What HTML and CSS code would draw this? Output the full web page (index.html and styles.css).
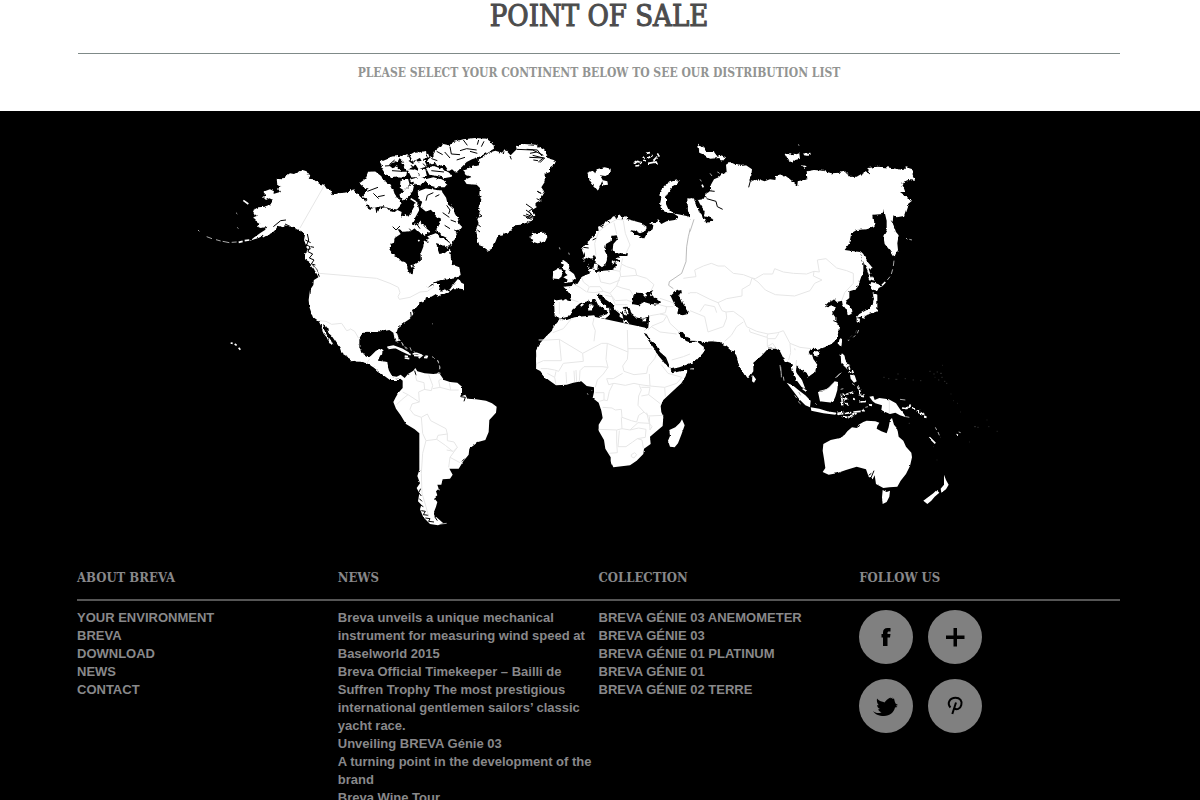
FILE: index.html
```html
<!DOCTYPE html>
<html lang="en">
<head>
<meta charset="utf-8">
<title>Breva – Point of Sale</title>
<link rel="stylesheet" href="styles.css">
</head>
<body>
<header class="intro">
  <h1 class="intro-title">POINT OF SALE</h1>
  <p class="intro-lead">PLEASE SELECT YOUR CONTINENT BELOW TO SEE OUR DISTRIBUTION LIST</p>
</header>

<main class="map-area">
<svg class="map" viewBox="190 130 820 404" role="img" aria-label="World map">
  <!-- Roughens the coastlines: strongly in the north, lightly elsewhere -->
  <filter id="coast" x="-5%" y="-5%" width="110%" height="110%" color-interpolation-filters="sRGB">
    <feTurbulence type="fractalNoise" baseFrequency="0.09" numOctaves="2" seed="4" result="noise"/>
    <feDisplacementMap in="SourceGraphic" in2="noise" scale="10" xChannelSelector="R" yChannelSelector="G"/>
  </filter>
  <filter id="coast-soft" x="-5%" y="-5%" width="110%" height="110%" color-interpolation-filters="sRGB">
    <feTurbulence type="fractalNoise" baseFrequency="0.06" numOctaves="2" seed="4" result="noise"/>
    <feDisplacementMap in="SourceGraphic" in2="noise" scale="6" xChannelSelector="R" yChannelSelector="G"/>
  </filter>
  <!-- Alaska, western Canada, Mexico -->
  <g transform="translate(190 130) scale(.33333)">
    <path class="land" d="M260 146L272 148 285 140 300 130 312 132 325 125 340 121 350 124 352 132 362 135 356 146 370 148 385 160 402 164 410 176 420 178 428 196 445 190 480 185 490 178 505 200 530 215V694L500 695 480 685 455 670 450 655 440 640 425 618 415 608 410 590 400 584 403 600 412 618 418 630 422 626 430 645 418 640 410 622 400 610 395 590 385 572 368 560 358 530 356 510 360 480 370 465 372 450 385 442 378 425 364 410 358 395 345 388 345 375 350 350 342 330 345 314 335 304 320 298 310 290 300 294 292 282 280 292 265 288 258 300 240 308 232 318 222 316 205 324 180 332 190 324 212 308 225 300 232 290 215 294 200 288 208 278 194 270 190 262 200 258 190 240 205 232 225 230 240 225 250 210 238 205 228 210 218 200 228 196 220 185 240 178 252 184 250 192 270 186 264 176 272 172 262 164Z"/>
    <path class="sea" d="M508 620L520 606 560 600V670L530 678 514 668 506 645Z"/>
    <path class="inlet" d="M352 312L356 330 350 345 360 350 354 365 368 372 358 384 372 390 364 402 376 405M346 330L362 338M345 362L362 356M362 350L372 352M368 405L380 418 388 440M250 290L272 272 288 270M285 282L302 290M450 188L476 184M430 192L455 182M402 586L412 608 426 630"/>
    <path class="isle" d="M160 211L175 222M218 320L245 306M178 330L164 332M158 334L146 337M122 639L128 640M134 642L140 646M146 653L151 659M372 412L384 432"/>
    <path class="islet" d="M140 336L125 337M118 338L98 334M92 333L78 329M66 326L50 320M24 300L28 304M138 248L142 252M142 292L145 296"/>
    <path class="border" d="M402 168L330 294M388 430L565 445 600 459M388 572L408 574 425 583 455 580 470 602 482 598 510 628"/>
  </g>
  <!-- Eastern Canada, Arctic islands, Greenland, Caribbean -->
  <g transform="translate(350 130) scale(.33333)">
    <path class="land" d="M0 176L8 194 20 188 35 205 48 215 44 228 60 236 76 234 80 252 90 235 108 232 120 244 134 246 142 240 155 246 152 260 168 252 175 260 190 236 200 214 208 240 196 262 186 280 198 292 182 304 160 305 142 296 152 312 134 324 132 338 122 342 118 358 130 374 142 380 154 394 172 400 172 416 180 432 188 433 192 405 212 392 210 376 220 350 222 330 240 325 258 338 262 355 268 372 286 368 300 356 303 385 310 405 328 412 332 435 315 445 296 448 272 450 250 458 232 474 252 462 270 462 268 478 282 486 300 478 308 466 326 444 334 458 342 462 342 478 312 474 300 484 285 488 262 500 258 492 244 500 228 502 224 516 208 520 200 532 186 540 190 552 180 566 162 578 145 592 140 606 147 628 142 636 134 628 130 608 118 600 100 604 90 600 80 606 72 606 40 605 28 625 28 665 38 678 55 682 75 675 80 662 98 658 96 672 86 678 84 692 112 696 116 728 134 744 155 750H120L90 728 70 712 50 700 20 692 0 694Z"/>
    <path class="land archipelago" d="M32 160L48 148 56 128 75 127 92 140 98 154 120 165 128 182 134 200 148 208 152 222 140 236 118 232 100 226 84 228 70 232 48 218 60 206 40 200 52 186 60 172 45 172ZM92 98L112 90 130 82 148 80 142 92 122 98 112 110 100 112ZM100 118L118 110 128 118 140 112 150 128 168 128 166 138 140 136 122 140 108 130ZM150 82L172 76 178 88 165 96ZM158 100L180 98 184 110 170 116ZM182 76L196 68 208 82 190 92ZM206 70L226 66 228 82 214 86ZM196 98L222 94 228 108 206 114ZM176 120L198 122 206 138 186 140ZM208 118L224 120 228 138 212 140ZM150 196L166 182 178 170 190 164 186 182 174 196 160 210ZM154 154L172 148 176 162 162 178 152 172ZM184 150L212 142 226 150 212 164 196 160ZM206 186L228 178 256 182 272 184 286 204 290 220 308 236 312 252 322 268 326 284 334 292 320 298 310 292 318 312 304 340 292 322 276 314 262 300 272 282 276 268 258 256 244 236 228 242 214 230 220 214 208 208ZM192 290L210 278 224 294 236 304 222 312 206 304ZM236 320L258 312 268 326 284 330 298 342 292 350 268 340 250 334Z"/>
    <path class="land" d="M226 148L250 142 280 150 292 162 284 172 258 172 232 164ZM228 114L252 108 278 118 298 128 306 140 286 144 262 138 238 134ZM232 92L250 78 256 60 280 42 298 46 310 36 340 28 375 24 410 26 430 42 432 56 408 70 388 80 366 88 350 96 330 116 318 128 306 118 296 124 284 104 262 108 256 98 240 104Z"/>
    <path class="land" d="M340 120L362 112 384 106 390 96 382 90 402 80 416 68 436 62 456 68 464 58 482 76 500 58 498 48 522 42 558 44 582 60 594 74 584 82 618 92 614 102 600 112 600 126 584 132 584 156 574 172 582 184 572 202 574 212 556 222 560 232 546 240 556 256 546 272 512 284 494 286 482 302 460 312 444 316 436 336 426 352 415 368 404 352 388 346 382 326 378 296 386 280 380 262 392 248 384 236 394 212 388 192 390 174 380 164 350 162 342 150 366 140 346 134ZM536 318L548 322 556 310 582 308 592 320 586 334 564 340 548 334 552 328ZM610 425L628 415V448L612 445ZM268 486L285 478 296 488 276 492Z"/>
    <path class="inlet" d="M300 50L304 72 330 74M330 62L350 56 380 60M284 66L300 84M360 64L382 70M320 90L345 82M245 86L262 92M260 64L278 74M340 30L352 46M386 30L382 44M402 34L394 50M52 184L84 172M84 200L104 196M70 190L86 206M228 212L232 196 250 188M256 200L268 194M290 226L300 240 296 252M278 248L298 262M302 270L318 276M284 286L300 296M134 90L118 104M126 122L156 124M105 108L132 106M218 100L230 112M244 122L282 126M500 58L548 60 580 76M548 76L580 84 565 96M540 70L560 66M528 222L548 236 536 244 552 262 528 252M528 262L545 268M386 250L396 258 386 262M384 284L392 290M382 300L390 306M560 206L572 212M562 184L574 190M480 78L484 88M460 72L462 64M448 70L450 62M182 546L184 562M150 288L138 300 128 290M190 310L178 296M210 296L196 276"/>
    <path class="sea" d="M214 316L232 322 232 336 218 330ZM202 370L212 376 212 392 198 396ZM228 272L252 262 272 264 270 280 250 290 232 286ZM235 250L246 244 262 262 246 270ZM270 350L284 346 288 362 272 370Z"/>
    <path class="isle" d="M198 216L182 206M196 230L188 244M220 74L214 106M236 82L232 72M170 92L190 106 200 92M192 120L212 130M110 92L124 86M205 330L208 334M184 405L186 412M115 655L136 652 156 662 182 674M192 676L214 678 206 684M164 684L178 686M222 682L232 683"/>
    <path class="islet" d="M246 580L248 582M146 626L152 632M156 640L160 648M166 650L172 656M180 652L184 662M192 664L198 672M250 682L254 686M262 690L266 698M268 706L270 716M266 726L262 732"/>
    <path class="border" d="M0 438L80 445 120 460 145 472 150 488 144 500 148 508 180 502 210 486 232 484 252 470M0 596L14 604 26 625M50 700L58 688 76 684 80 692M72 710L86 700 108 698"/>
  </g>
  <!-- Europe, western Asia, north Africa -->
  <g transform="translate(520 130) scale(.33333)">
    <path class="land" d="M186 360L190 348 206 344 202 336 222 320 228 306 236 302 234 290 250 284 258 272 272 268 280 258 292 262 296 252 306 262 318 258 322 268 340 272 362 278 380 290 376 304 360 310 345 302 332 300 342 314 358 316 370 330 382 308 398 298 400 286 390 280 408 278 412 268 424 282 440 274 464 270 478 262 460 250 500 258 522 270 504 244 502 205 514 206 520 232 540 244 552 262 560 284 600 290V635L580 632 552 636 530 632 532 650 552 650 550 668 528 692 500 704 478 712 452 718 456 730 480 724 502 722 490 750H80L60 725 50 710 48 690 52 655 76 625 96 606 98 592 118 572 122 566 104 556 102 512 130 508 150 514 152 496 138 478 130 470 155 468 160 460 172 462 186 440 210 430 206 416 204 402 220 392 190 392 192 376Z"/>
    <path class="sea" d="M222 374L228 386 226 402 236 404 246 412 258 402 262 378 254 362 258 342 272 334 274 318 290 316 294 326 280 342 278 360 286 372 304 370 324 370 322 378 300 378 286 384 300 392 296 398 286 394 288 408 276 420 250 422 230 430 222 416 210 418 204 400 216 394 190 392 198 380 214 386ZM120 566L152 558 156 540 180 520 204 514 214 504 226 508 234 524 248 534 262 542 262 552 252 556 254 566 266 558 270 548 266 540 274 542 262 530 246 518 238 508 232 494 246 494 250 504 268 516 282 524 286 540 300 552 298 560 310 566 306 550 302 544 314 542 308 532 322 530 330 534 334 552 346 562 368 566 388 558 386 582 384 598 366 598 345 592 322 592 300 588 285 602 272 594 260 590 242 582 226 578 230 568 222 556 200 558 164 562 140 570ZM336 522L340 498 352 488 372 490 370 500 382 498 376 490 400 480 390 494 404 502 420 516 414 524 392 522 372 516 356 526ZM452 498L466 484 484 480 486 492 474 494 484 508 490 522 502 540 504 552 488 556 472 548 476 536 462 520ZM474 605L488 606 500 622 516 628 528 622 534 636 524 642 500 634 482 622ZM370 608L380 612 392 632 410 648 420 666 438 682 452 716 436 704 416 684 404 658 384 630Z"/>
    <path class="land" d="M130 390L142 398 148 408 146 420 162 432 168 446 156 456 130 460 144 450 130 442 142 436 138 422 126 416 128 404 120 396ZM100 424L118 414 126 424 120 444 98 446ZM24 318L34 322 36 308 52 312 72 308 82 322 74 332 52 340 34 334 42 328ZM202 128L218 122 226 130 230 118 254 112 272 116 272 130 256 138 240 136 248 150 234 182 224 170 210 152ZM246 150L262 154 264 164 250 166ZM476 150L472 162 458 170 446 186 438 202 438 222 446 240 464 250 442 248 424 240 420 222 424 204 420 186 432 168 450 156ZM535 44L552 50 560 66 582 66 596 84 570 86 552 74 538 68ZM208 508L216 506 216 518 210 520ZM206 522L218 524 216 540 208 542ZM238 558L258 554 256 566 240 564ZM310 572L328 576 324 580 310 578ZM364 568L380 564 376 574 366 574ZM222 404L234 404 232 418 220 416Z"/>
    <path class="isle rough" d="M342 102L352 94 366 98M346 108L358 106M378 70L390 68M384 84L398 76M400 92L412 80M384 100L408 96 412 104M370 90L378 96M412 70L418 80M372 80L376 86M182 528L190 522M162 534L170 534M318 536L324 550M308 540L320 556M302 528L312 522M250 392L254 384M276 398L284 394"/>
    <path class="islet" d="M118 352L120 358M146 368L148 374M510 717L522 716M240 700L242 706"/>
    <path class="inlet" d="M486 244L518 262M518 206L522 232 546 252 554 272 544 288M546 200L560 212 588 212 600 222M560 206L580 226M534 192L548 210M20 58L52 60 66 78M28 82L74 84 60 98M40 90L54 92M10 256L38 264M18 240L34 252 22 266M52 184L62 190M238 286L248 292M262 272L270 278M286 258L290 268M308 262L306 270M218 330L230 324M190 352L206 354"/>
    <path class="frontier" d="M517 270L505 320 500 350 498 395 485 430 448 455 446 466 460 476"/>
    <path class="border" d="M228 376L224 340 236 305 260 285 290 268 310 270 318 262M282 278L290 312M310 272L316 310 330 345 318 370M308 385L304 402 320 410 346 418 350 436 380 445 402 464 394 480M278 420L300 424 304 404M300 424L302 440 350 436M300 440L290 468 306 474 330 480 340 496M235 430L242 456 270 462 300 450M185 442L190 456 208 470 202 486 222 488 250 484 270 490 290 468M160 462L180 472 200 486M152 508L176 516M118 516L118 552M210 470L240 470 250 484M270 490L286 512 320 510 336 516M256 496L276 500 286 524M288 524L322 524M402 520L440 530 436 548 420 552M420 505L450 515 462 520M436 530L460 530M386 558L420 552 440 556 450 580 476 604M384 600L396 588 430 574 440 558M394 590L420 606 470 612M455 690L490 680 520 668 524 640M490 445L524 440 524 416 560 410 580 400 600 405M504 490L550 486 570 512 600 518M504 548L540 545 560 562 600 540M525 550L534 600 550 610 548 632M560 562L560 610 600 590M98 608L130 596 156 564M222 560L218 582 225 602 222 634"/>
  </g>
  <!-- Siberia, China, India, Japan -->
  <g transform="translate(690 130) scale(.33333)">
    <path class="land" d="M0 206L12 202 14 215 24 240 34 262 44 268 42 286 70 268 56 262 42 258 44 244 30 222 24 210 40 208 50 190 64 182 62 166 72 148 86 142 98 130 110 126 108 104 120 96 138 104 150 108 168 106 186 118 184 136 178 150 190 152 206 148 224 154 240 148 256 150 258 138 284 136 300 148 322 168 322 154 352 148 350 124 372 120 400 122 424 130 450 128 470 124 480 140 500 140 524 126 534 130 536 114 560 110 590 112 640 120 648 112 668 118 668 134 676 152 654 150 634 158 640 170 646 186 630 186 650 200 666 212 654 222 642 258 620 262 610 256 608 278 618 306 626 316 622 340 624 360 614 382 602 364 584 342 580 318 590 300 590 272 586 256 582 236 578 252 550 254 554 290 530 298 500 300 484 310 478 340 464 360 480 362 492 364 510 366 520 400 520 424 508 456 498 478 478 484 478 504 466 514 474 526 486 538 488 552 474 556 470 540 458 524 456 512 440 516 432 508 420 512 408 524 412 532 424 526 440 534 426 548 436 562 436 576 448 584 444 612 438 630 424 642 404 652 382 660 366 656 360 670 380 704 376 724 356 740 350 728 332 718 320 706 318 726 326 750H320L310 728 304 700 284 692 270 664 258 656 234 656 214 678 190 698 190 724 176 744 164 736 148 708 134 664 124 662 110 650 90 636 60 634 0 632Z"/>
    <path class="land" d="M0 640L20 634 42 652 32 672 18 686 0 690ZM24 44L44 54 46 68 72 66 76 84 54 82 46 72 30 70ZM84 72L108 82 94 98ZM284 72L302 70 310 76 328 70 330 86 316 90 306 98 292 88ZM340 70L364 72 354 78 342 76ZM334 106L350 108 346 114ZM510 362L520 372 530 392 548 414 536 416 544 440 552 452 540 448 532 420 520 396ZM544 456L558 460 578 468 566 474 562 482 544 478 540 468ZM548 486L562 494 562 512 562 544 540 552 520 558 498 564 508 552 530 540 548 524 552 506ZM500 564L510 566 508 580 500 576ZM520 558L530 556 524 566 516 564ZM448 628L456 630 454 650 446 644ZM368 662L384 664 386 674 374 678ZM452 676L462 674 468 700 480 706 466 712 454 700ZM188 736L196 750H188Z"/>
    <path class="isle" d="M576 466L586 456M36 164L40 172"/>
    <path class="islet" d="M592 450L600 440M604 432L608 418M610 408L612 392M648 324L652 328M658 328L666 330M324 44L328 46M30 148L34 154M506 600L502 610M496 616L490 622M478 630L474 632M270 705L272 722M274 732L274 742M8 716L12 716M436 744L450 730M60 130L66 138M82 126L90 130"/>
    <path class="inlet" d="M28 200L36 194 50 202M50 206L78 214 82 230 98 238M40 190L54 182 74 184M76 116L92 130M184 142L176 172M322 150L320 164M466 126L480 138 504 136M604 272L616 288M530 124L540 132M430 572L446 578"/>
    <path class="frontier" d="M12 268L0 305"/>
    <path class="border" d="M0 442L18 440 14 420 40 408 64 400 84 408 104 408 130 430 160 434 186 444 196 446 220 432 248 432 254 416 280 426 310 430 350 432 372 424 388 426 382 390 408 386 440 414 470 422 490 430 490 460 464 488 456 510M186 444L204 456 226 480 256 494 314 498 360 482 374 460 396 450 370 438 372 424M186 444L180 464 156 478 156 498 110 506 84 518 60 508 20 488 0 488M84 518L96 542 108 546 110 564 100 590 54 606 44 560 0 542M108 546L130 544 160 566 170 590 200 604 234 612 264 608 280 602 300 640 330 652 364 656M160 576L140 590 124 616 104 634M178 598L180 606 230 622 234 612M232 620L232 650 248 640 256 652M234 626L256 626 266 610M300 640L302 668 296 690M314 655L320 680 344 680 360 714 340 726M320 684L318 706M30 545L44 524 74 530 80 548"/>
  </g>
  <!-- South America -->
  <g transform="translate(370 340) scale(.33333)">
    <path class="land soft" d="M0 50L18 32 36 28 32 44 22 64 50 66 56 90 66 108 80 110 92 104 104 114 114 102 130 92 136 84 142 94 164 100 190 102 208 100 222 120 240 126 262 128 276 140 276 158 270 170 286 164 292 176 318 178 348 182 366 190 380 200 378 218 358 240 356 276 346 300 324 306 298 326 296 344 280 364 266 386 238 386 248 404 240 416 218 418 214 434 202 434 206 446 198 454 202 466 192 474 202 486 198 500 192 516 198 530 220 550 204 556 180 552 160 532 150 508 154 494 144 484 148 460 140 444 150 430 142 408 148 390 148 320 148 280 134 268 108 252 92 226 78 206 70 186 76 174 84 160 98 144 98 122 92 116 78 116 66 112 56 106 36 82 0 76Z"/>
    <path class="isle" d="M52 22L70 18 96 28 116 40M128 42L140 40 156 46M104 48L114 50M166 48L174 50"/>
    <path class="islet" d="M186 50L190 52M204 62L206 70M210 80L208 88M206 98L212 100M76 0L84 8M94 6L100 14M104 20L110 28M212 552L230 550M204 448L210 450"/>
    <path class="inlet" d="M134 92L138 106M272 170L286 172 282 184M152 446L146 458 154 468M148 476L156 484M150 494L160 500M154 512L166 514 160 524 176 526M166 534L180 536 176 544 192 546M194 530L202 542M276 364L284 356"/>
    <path class="border" d="M136 104L140 122 162 128 164 148 146 156 148 186 126 192 120 208 132 224 154 232 158 280 168 302 158 340 154 400 156 460 168 500 176 530M98 156L114 164 94 180 80 194M114 164L148 186M162 148L184 152 188 136 176 104M188 146L210 142 206 122 216 116M210 142L240 150 266 150M238 128L242 150M154 232L172 222 182 242 228 266 232 282M168 302L200 298 204 286 232 282 232 302 252 306 262 322 250 334 230 330M200 298L226 316 248 334M262 322L240 352 236 382M240 352L270 368"/>
  </g>
  <!-- Africa -->
  <g transform="translate(520 300) scale(.33333)">
    <path class="land soft" d="M98 90L116 62 150 60 222 50 380 84 370 96 388 128 408 158 428 182 444 204 458 222 502 212 496 230 484 250 458 274 430 300 422 318 424 336 430 350 428 378 404 398 390 410 392 432 372 446 370 462 350 482 330 496 280 502 272 484 272 472 256 446 252 420 236 392 236 374 248 354 244 332 236 308 218 294 222 276 222 262 200 258 184 244 160 248 140 254 108 256 86 240 72 228 62 214 48 206 50 180 48 152 56 134 76 112ZM486 358L494 376 484 404 474 430 464 442 450 440 444 422 450 408 448 390 466 382 480 368Z"/>
    <path class="islet" d="M202 280L204 284M214 270L216 272M514 206L522 207"/>
    <path class="border" d="M98 98L130 86 156 54M222 54L218 72 226 92 222 124M56 120H84L118 118 188 160 245 130 262 130 324 156 322 90M324 146H396M118 118L124 182H70M70 182L52 190M188 160L190 184 130 190 116 214 104 210 82 206 62 206M262 130L258 178 264 202 246 200 192 200 180 212 178 246M324 156L322 178 308 198 312 214 342 224 380 220 384 200 404 176 410 160M264 202L250 222 232 240 226 262M260 236L280 236 308 220M260 236L266 254 282 250 316 256 342 250 360 254 390 258 388 222M390 258L434 262 470 250 486 232 444 220 424 194M434 262L436 290M226 278H252V300L238 304M252 300L262 302 268 274 280 250M248 322L276 324 286 330 304 328 306 352 334 362 350 366 356 346 372 336 354 316 356 288 364 270 358 256M364 262L390 262 386 284 364 288M386 284L422 312M372 336L386 348 430 346M236 388L290 390 306 386 304 352M306 386L330 390 354 368 388 370 380 338M290 390V426L292 458 268 460M298 392L294 440 318 440 338 426 352 416 376 412 378 388 356 384 330 390M352 416L366 420 370 444M334 464L344 458 350 464 342 474 334 470ZM388 370L396 380 390 390 388 350M140 250L138 216M164 246L162 212M170 246L168 210M108 254L104 232 82 220M104 232L108 214"/>
  </g>
  <!-- South-east Asia, Australia, New Zealand -->
  <g transform="translate(740 320) scale(.33333)">
    <path class="land soft" d="M150 110L176 124 190 140 206 168 222 158 232 134 220 118 214 96 160 90ZM38 164L48 178 42 188 36 184ZM158 140L172 162 186 180 196 206 184 200 172 184 164 166ZM140 188L158 196 180 214 196 226 212 242 210 262 196 256 178 238 160 214ZM212 262L238 266 262 274 290 278 286 284 250 280 214 272ZM234 216L248 214 268 202 284 184 294 186 292 210 286 230 278 248 258 246 240 244ZM304 104L312 104 318 126 330 134 316 132 304 122ZM330 164L344 166 350 184 342 188 332 176ZM388 230L400 228 404 240 418 234 446 238 468 250 480 268 490 280 498 292 480 286 466 278 450 282 436 276 424 270 426 256 406 250 398 244ZM300 60L304 58 304 76 298 72ZM208 98L222 88 228 98 236 94 236 104 226 108Z"/>
    <path class="sea" d="M206 96L212 88 226 86 230 92 222 96 218 104 210 104Z"/>
    <path class="land soft" d="M248 392L250 372 272 360 300 354 314 344 322 334 336 322 350 324 356 314 370 306 380 302 406 304 418 308 412 318 410 326 424 334 440 340 446 322 450 300 456 294 462 314 472 326 476 350 490 362 498 380 514 398 516 412 510 438 498 462 482 482 472 500 448 502 430 504 408 492 404 466 398 478 386 470 378 448 350 440 318 450 290 460 266 464 248 456 256 444 252 416ZM428 510L440 516 450 512 448 530 440 546 428 552 426 532ZM612 464L618 480 626 494 618 508 604 518 602 506 612 494ZM590 510L598 518 584 530 574 542 562 552 550 542 566 530 580 520Z"/>
    <path class="isle rough" d="M302 224L322 222 340 216M304 228L308 256M308 238L322 236M312 242L326 256M358 208L362 224M356 226L372 230M292 280L310 278M314 280L334 278M340 276L362 274M324 292L350 280M308 290L322 292M366 272L374 272M326 140L330 150M336 150L340 160M326 156L334 160M188 206L200 214M358 246L378 244M340 236L348 238M386 254L396 256M486 264L500 266 512 254M516 262L526 268M530 272L540 276M542 278L550 284M552 288L562 294M568 352L586 370M646 344L654 346M352 200L358 204"/>
    <path class="islet" d="M498 290L508 292M586 322L590 330M594 336L598 346M656 336L662 338M480 238L496 240M122 140L124 164M130 170L132 182M290 172L304 158M316 140L322 148M182 226L176 216M336 190L344 196M302 208L310 206M226 250L230 254M164 226L170 234M174 244L182 252M376 262L384 260"/>
    <path class="speck" d="M430 172H434M444 176H448M466 178H472M472 162H476M494 176H498M518 180H522M540 182H544M568 154H572M580 162H584M590 156H594M600 160H606M604 172H608M612 184H616M594 180H598M618 190H622M584 172H586M606 136H608M632 222H634M640 242H642M652 250H654M702 320H708M712 322H716M740 300H742M688 366H690M660 276H662M350 30L346 40M336 46L330 52M322 60H326M745 320H748M770 334H773M506 310H510M580 380H582M600 352H602M590 420H592"/>
    <path class="inlet" d="M386 466L394 460M392 476L402 452M352 322L360 316M296 354L308 348"/>
    <path class="border" d="M448 240V280M238 214L262 208 280 190"/>
  </g>
</svg>
</main>

<footer class="footer">
  <div class="footer-row footer-heads">
    <h2 class="footer-title">ABOUT BREVA</h2>
    <h2 class="footer-title">NEWS</h2>
    <h2 class="footer-title">COLLECTION</h2>
    <h2 class="footer-title">FOLLOW US</h2>
  </div>
  <div class="footer-row footer-cols">
    <ul class="links">
      <li><a href="#">YOUR ENVIRONMENT</a></li>
      <li><a href="#">BREVA</a></li>
      <li><a href="#">DOWNLOAD</a></li>
      <li><a href="#">NEWS</a></li>
      <li><a href="#">CONTACT</a></li>
    </ul>
    <ul class="links">
      <li><a href="#">Breva unveils a unique mechanical instrument for measuring wind speed at Baselworld 2015</a></li>
      <li><a href="#">Breva Official Timekeeper – Bailli de Suffren Trophy The most prestigious international gentlemen sailors’ classic yacht race.</a></li>
      <li><a href="#">Unveiling BREVA Génie 03</a></li>
      <li><a href="#">A turning point in the development of the brand</a></li>
      <li><a href="#">Breva Wine Tour</a></li>
    </ul>
    <ul class="links">
      <li><a href="#">BREVA GÉNIE 03 ANEMOMETER</a></li>
      <li><a href="#">BREVA GÉNIE 03</a></li>
      <li><a href="#">BREVA GÉNIE 01 PLATINUM</a></li>
      <li><a href="#">BREVA GÉNIE 01</a></li>
      <li><a href="#">BREVA GÉNIE 02 TERRE</a></li>
    </ul>
    <div class="social">
      <a class="social-link" href="#" aria-label="Facebook"><svg viewBox="0 0 54 54"><path d="M24 36V27.500H22.500V24H24V22.500C24 19.500 25.500 18 28.500 18H31.500V21.500H29.800C28.800 21.500 28.500 22 28.500 23V24H31.500L31 27.500H28.500V36Z"/></svg></a>
      <a class="social-link" href="#" aria-label="Google Plus"><svg viewBox="0 0 54 54"><path d="M25.500 18H29V25.500H36.500V29H29V36.500H25.500V29H18V25.500H25.500Z"/></svg></a>
      <a class="social-link" href="#" aria-label="Twitter"><svg viewBox="0 0 54 54"><path d="M14 32C17 34.500 20 34.500 22.500 33.200C20.500 32.800 19.500 31.500 19.200 30.200L21 30C19 29 18 27.500 18.200 26L19.800 26.300C18 24.500 17.600 21.500 18 19.500C20 22 22 22.500 24.500 23L25.500 23.500C26.500 22 29 19.500 31.500 18.500L31.800 19.500L33.500 18.500L33.200 20L35 19.500C35.500 21.500 36 23.500 36.500 24.500L39 26L36.800 26.800L38.500 28L36 28.500C35 33 31 37 25 37C20 37 15.500 35 14 32Z"/></svg></a>
      <a class="social-link" href="#" aria-label="Pinterest"><svg viewBox="0 0 54 54"><path class="pin" d="M22.500 28.500C18.500 24 22 18.800 27.500 18.800C32 18.800 34.500 22 33.300 26C32.300 30 28.500 31.500 26.300 29M28 23.500L24.300 35"/></svg></a>
    </div>
  </div>
</footer>
</body>
</html>
```
FILE: styles.css
```css
* {
  box-sizing: border-box;
}

body {
  margin: 0;
  background: #000;
  color: #88888a;
  font: bold 13px/18px "Liberation Sans", Arial, sans-serif;
}

h1, h2, p, ul {
  margin: 0;
  padding: 0;
}

.intro {
  padding: 0 80px 28px 78px;
  background: #fff;
  text-align: center;
  font-family: "DejaVu Serif Condensed", "DejaVu Serif", serif;
}

.intro-title {
  padding-bottom: 21px;
  border-bottom: 1px solid #7f8a88;
  color: #4c4c4c;
  font-size: 29px;
  line-height: 32px;
  font-weight: normal;
  -webkit-text-stroke: 1px #4c4c4c;
}

.intro-lead {
  padding-top: 9px;
  color: #929492;
  font-size: 12px;
  line-height: 20px;
}

.map-area {
  padding: 19px 190px 0;
}

.map {
  display: block;
  width: 100%;
}

.land, .sea, .rough {
  filter: url(#coast);
}

.soft {
  filter: url(#coast-soft);
}

.land {
  fill: #fff;
}

.archipelago {
  stroke: #fff;
  stroke-width: 5;
}

.sea {
  fill: #000;
}

.inlet, .isle, .islet, .border, .frontier, .speck {
  fill: none;
}

.inlet {
  stroke: #000;
  stroke-width: 3;
}

.isle {
  stroke: #fff;
  stroke-width: 5;
}

.islet {
  stroke: #aaa;
  stroke-width: 3;
}

.speck {
  stroke: #444;
  stroke-width: 2;
}

.border {
  stroke: #e6e6e6;
  stroke-width: 3;
}

.frontier {
  stroke: #999;
  stroke-width: 2;
}

.footer {
  padding: 35px 80px 0 77px;
}

.footer-row {
  display: grid;
  grid-template-columns: repeat(4, 1fr);
}

.footer-heads {
  padding-bottom: 12px;
  border-bottom: 2px solid #555;
}

.footer-title {
  font: bold 13px/18px "DejaVu Serif Condensed", "DejaVu Serif", serif;
}

.footer-cols {
  padding-top: 8px;
}

.links {
  padding-right: 4px;
  list-style: none;
}

.links a {
  color: inherit;
  text-decoration: none;
}

.social {
  display: grid;
  grid-template-columns: 54px 54px;
  gap: 15px;
  align-content: start;
  padding-top: 1px;
}

.social-link {
  height: 54px;
  border-radius: 50%;
  background: #808080;
}

.social-link svg {
  display: block;
}

.pin {
  fill: none;
  stroke: #000;
  stroke-width: 2;
}
```
